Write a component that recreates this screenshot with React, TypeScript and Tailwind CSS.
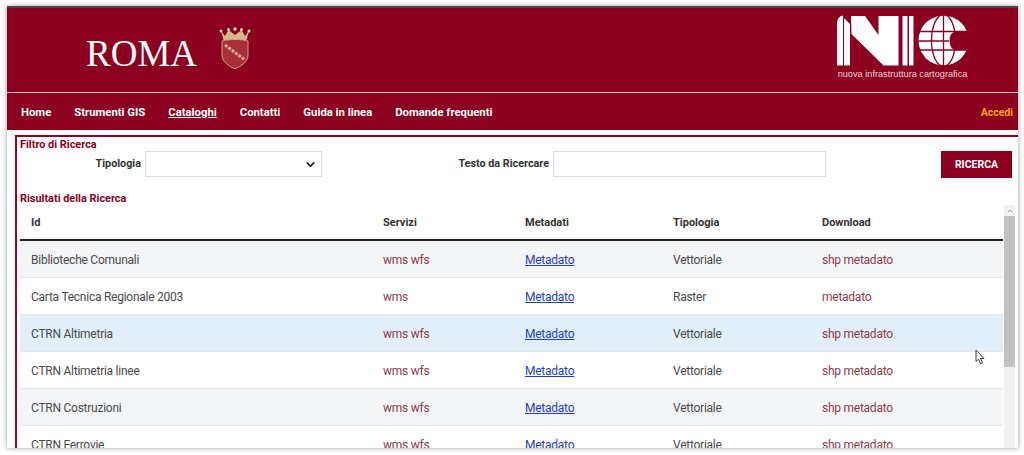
import { ChevronDown, ChevronUp } from "lucide-react";

const rows = [
  ["Biblioteche Comunali", "wms wfs", "Vettoriale", "shp metadato", "bg-[#f4f5f7]"],
  ["Carta Tecnica Regionale 2003", "wms", "Raster", "metadato", "bg-white"],
  ["CTRN Altimetria", "wms wfs", "Vettoriale", "shp metadato", "bg-[#e2eff8]"],
  ["CTRN Altimetria linee", "wms wfs", "Vettoriale", "shp metadato", "bg-white"],
  ["CTRN Costruzioni", "wms wfs", "Vettoriale", "shp metadato", "bg-[#f4f5f7]"],
  ["CTRN Ferrovie", "wms wfs", "Vettoriale", "shp metadato", "bg-white"],
];
const nav = ["Home", "Strumenti GIS", "Cataloghi", "Contatti", "Guida in linea", "Domande frequenti"];

function Crest() {
  return (
    <svg width="32" height="42" viewBox="0 0 32 42">
      <path d="M2 4 L6 9 L9.500 3 L16 8 L22.500 3 L26 9 L30 4 L27.500 13 H4.500 Z" fill="#d3b88d" />
      <circle cx="2" cy="4" r="1.500" fill="#e9dcc0" />
      <circle cx="9.500" cy="2.500" r="1.500" fill="#e9dcc0" />
      <circle cx="16" cy="2" r="1.700" fill="#e9dcc0" />
      <circle cx="22.500" cy="2.500" r="1.500" fill="#e9dcc0" />
      <circle cx="30" cy="4" r="1.500" fill="#e9dcc0" />
      <path d="M3 14 C10 12 22 12 29 14 V28 C29 35 22 39 16 42 C10 39 3 35 3 28 Z" fill="#a62f38" stroke="#cfa383" strokeWidth="1" />
      <path d="M6 18 L26 33" stroke="#d9a99a" strokeWidth="3" strokeDasharray="3 1.200" />
    </svg>
  );
}

function NicLogo() {
  return (
    <svg width="131" height="51" viewBox="0 0 131 51" className="block">
      <path d="M0 8 Q0.500 1 6 0.500 V50.500 H0 Z" fill="#fff" />
      <path d="M7 3 L13 9 V50.500 H7 Z" fill="#fff" />
      <path d="M14 1 H28 L41.500 20 V1 H61.500 V50.500 H46.500 L14.500 19 Z" fill="#fff" />
      <rect x="65.500" y="1" width="5" height="49.500" fill="#fff" />
      <rect x="72" y="1" width="4.500" height="49.500" fill="#fff" />
      <circle cx="106.500" cy="25.500" r="25" fill="#fff" />
      <g fill="none" stroke="#8b001f" strokeWidth="1.300">
        <path d="M78 16.500 H135 M78 26 H112 M78 35 H135" />
        <ellipse cx="106.500" cy="25.500" rx="12" ry="26" />
        <path d="M106.500 0 V51" />
      </g>
      <path d="M131 16.500 H118 Q112.500 18 112.500 25.500 Q112.500 33.500 118 35 H131 Z" fill="#8b001f" />
    </svg>
  );
}

function Cursor() {
  return (
    <svg width="11" height="16" viewBox="0 0 11 16" className="absolute left-[968px] top-[341px]">
      <path d="M1 1 V12.500 L3.500 10.200 L5.500 14.800 L7.500 13.800 L5.500 9.500 H9 Z" fill="#fff" stroke="#3a3f45" strokeWidth="1" strokeLinejoin="round" />
    </svg>
  );
}

export default function App() {
  return (
    <div className="h-[455px] w-[1024px] overflow-hidden bg-white pb-[7px] pl-[7px] pr-[6px] pt-[6px] font-['Roboto',sans-serif]">
      <div className="relative flex h-full flex-col overflow-hidden border-t-2 border-[#3f4a4a] bg-white shadow-[0_0_5px_rgba(0,0,0,0.4)]">
        <header className="flex h-[85px] shrink-0 items-start justify-between border-b border-[#e3c4ca] bg-[#8b001f]">
          <div className="flex h-full items-center">
            <span className="ml-[79px] mt-[7px] font-['Liberation_Serif',serif] text-[37px] leading-none text-white">ROMA</span>
            <span className="ml-[22px] mt-[-4px] block"><Crest /></span>
          </div>
          <div className="mr-[50px] flex w-[131px] flex-col items-center pt-[7px]">
            <NicLogo />
            <span className="mt-[3px] whitespace-nowrap font-['Liberation_Sans',sans-serif] text-[9.200px] leading-[11px] text-[#ecd3d8]">nuova infrastruttura cartografica</span>
          </div>
        </header>
        <nav className="flex h-[37px] shrink-0 items-center bg-[#8b001f] pl-[14px] pr-[5px] pt-[3px] text-[11.300px] font-bold text-white">
          <div className="flex flex-1 gap-[23px]">
            {nav.map((n) => (
              <a key={n} className={n === "Cataloghi" ? "underline" : ""}>{n}</a>
            ))}
          </div>
          <a className="text-[10.500px] text-[#ffa500]">Accedi</a>
        </nav>
        <main className="ml-[8px] mt-[5px] flex min-h-0 flex-1 flex-col border-l-2 border-t-2 border-[#8b001f] pl-[3px]">
          <h2 className="h-[14px] pt-px text-[10.900px] font-bold leading-[14px] text-[#8b001f]">Filtro di Ricerca</h2>
          <div className="flex h-[26px] items-center text-[10.800px] font-bold text-[#333]">
            <label className="mr-[4px] w-[121px] shrink-0 text-right">Tipologia</label>
            <div className="flex h-[26px] w-[177px] shrink-0 items-center justify-end border border-[#dcdcdc] bg-white pr-[4px]">
              <ChevronDown size={13} strokeWidth={3} className="text-[#222]" />
            </div>
            <label className="mr-[4px] w-[227px] shrink-0 text-right">Testo da Ricercare</label>
            <div className="h-[26px] w-[273px] shrink-0 border border-[#dcdcdc] bg-white" />
            <button className="ml-[115px] h-[27px] w-[71px] shrink-0 bg-[#8b001f] pt-px text-[10.500px] font-bold text-white">RICERCA</button>
          </div>
          <h2 className="mt-[14px] h-[14px] pt-px text-[10.900px] font-bold leading-[14px] text-[#8b001f]">Risultati della Ricerca</h2>
          <div className="flex min-h-0 flex-1">
            <div className="min-w-0 flex-1 overflow-hidden">
              <table className="w-full table-fixed border-collapse text-[12px] tracking-[-0.250px] text-[#4a4a4a]">
                <colgroup>
                  <col className="w-[352px]" />
                  <col className="w-[142px]" />
                  <col className="w-[148px]" />
                  <col className="w-[149px]" />
                  <col />
                </colgroup>
                <thead>
                  <tr className="h-[35px] border-b-2 border-[#222] text-left text-[11px] tracking-normal text-[#333]">
                    {["Id", "Servizi", "Metadati", "Tipologia", "Download"].map((h) => (
                      <th key={h} className="pl-[11px] pt-[3px] font-bold">{h}</th>
                    ))}
                  </tr>
                </thead>
                <tbody>
                  {rows.map((r) => (
                    <tr key={r[0]} className={`h-[37px] border-b border-[#e4e6e8] ${r[4]}`}>
                      <td className="pl-[11px] pt-[3px]">{r[0]}</td>
                      <td className="pl-[11px] pt-[3px] text-[#8f3a4c]">{r[1]}</td>
                      <td className="pl-[11px] pt-[3px] text-[#1d3fc4] underline">Metadato</td>
                      <td className="pl-[11px] pt-[3px]">{r[2]}</td>
                      <td className="pl-[11px] pt-[3px] text-[#8f3a4c]">{r[3]}</td>
                    </tr>
                  ))}
                </tbody>
              </table>
            </div>
            <div className="ml-px mr-[3px] flex w-[11px] shrink-0 flex-col bg-[#f1f1f1]">
              <div className="flex h-[11px] items-center justify-center">
                <ChevronUp size={8} strokeWidth={3} className="text-[#a0a0a0]" />
              </div>
              <div className="h-[151px] bg-[#c1c1c1]" />
            </div>
          </div>
        </main>
        <Cursor />
      </div>
    </div>
  );
}
